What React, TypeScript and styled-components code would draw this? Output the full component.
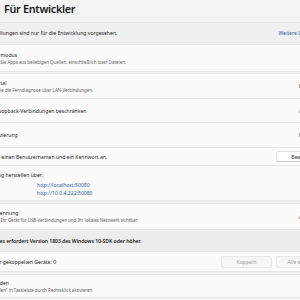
import React from "react";
import styled, { createGlobalStyle } from "styled-components";

const GlobalStyle = createGlobalStyle`
  html, body { margin: 0; padding: 0; background: #f3f3f3; }
  body {
    font-family: "Noto Sans", "Open Sans", sans-serif;
    color: #1b1b1b;
  }
`;

const Viewport = styled.div`
  width: 300px;
  height: 300px;
  overflow: hidden;
  background: #f3f3f3;
`;

const Column = styled.div`
  margin-left: -40px;
  width: 402px;
  display: flex;
  flex-direction: column;
`;

const PageTitle = styled.h1`
  margin: 0;
  height: 22px;
  box-sizing: border-box;
  padding: 3px 0 0 44px;
  font-size: 10.8px;
  letter-spacing: -0.3px;
  line-height: 12px;
  font-weight: 600;
  color: #1a1a1a;
  white-space: nowrap;
`;

const Card = styled.section<{ $mt?: number; $muted?: boolean }>`
  margin-top: ${(p) => p.$mt ?? 0}px;
  border: 1px solid #e5e5e5;
  border-radius: 3px;
  background: ${(p) => (p.$muted ? "#f0f0f0" : "#fbfbfb")};
  display: flex;
  flex-direction: column;
  overflow: hidden;
`;

const Row = styled.div<{
  $h: number;
  $divider?: boolean;
  $inset?: number;
  $end?: number;
  $shade?: boolean;
  $top?: boolean;
}>`
  box-sizing: border-box;
  height: ${(p) => p.$h}px;
  display: flex;
  align-items: ${(p) => (p.$top ? "flex-start" : "center")};
  justify-content: space-between;
  gap: 8px;
  padding: ${(p) => (p.$top ? 5 : 0)}px ${(p) => p.$end ?? 8}px 0 ${(p) => p.$inset ?? 15}px;
  border-top: ${(p) => (p.$divider ? "1px solid #e5e5e5" : "0")};
  background: ${(p) => (p.$shade ? "#ededed" : "transparent")};
`;

const TextStack = styled.div`
  display: flex;
  flex-direction: column;
  min-width: 0;
  white-space: nowrap;
`;

const Label = styled.span<{ $strong?: boolean }>`
  font-size: 5.1px;
  line-height: 8px;
  color: #1b1b1b;
  font-weight: ${(p) => (p.$strong ? 600 : 400)};
  letter-spacing: ${(p) => (p.$strong ? "-0.05px" : "0")};
  white-space: nowrap;
`;

const Caption = styled.span`
  font-size: 4.4px;
  line-height: 7px;
  color: #616161;
  white-space: nowrap;
`;

const LinkList = styled.div`
  display: flex;
  flex-direction: column;
  margin-top: 2px;
  padding-left: 61px;
`;

const Link = styled.a`
  font-size: 5.1px;
  line-height: 8px;
  color: #1f5fa8;
  text-decoration: none;
  white-space: nowrap;
`;

const MoreLink = styled.a`
  flex: 0 0 51px;
  font-size: 5.1px;
  line-height: 8px;
  color: #1f5fa8;
  text-decoration: none;
  white-space: nowrap;
`;

const Trailing = styled.div<{ $gap?: number }>`
  display: flex;
  align-items: center;
  flex-shrink: 0;
  gap: ${(p) => p.$gap ?? 0}px;
`;

const ToggleGroup = styled.div`
  flex: 0 0 34px;
  display: flex;
  align-items: center;
  gap: 6px;
`;

const ToggleText = styled.span`
  width: 10px;
  font-size: 5.1px;
  line-height: 8px;
  color: #1b1b1b;
`;

const Switch = styled.span<{ $on?: boolean }>`
  position: relative;
  box-sizing: border-box;
  width: 18px;
  height: 9px;
  border-radius: 5px;
  border: 1px solid ${(p) => (p.$on ? "#005fb8" : "#8a8a8a")};
  background: ${(p) => (p.$on ? "#005fb8" : "transparent")};
  &::after {
    content: "";
    position: absolute;
    top: 1.5px;
    left: ${(p) => (p.$on ? "10px" : "2px")};
    width: 4px;
    height: 4px;
    border-radius: 50%;
    background: ${(p) => (p.$on ? "#ffffff" : "#5a5a5a")};
  }
`;

const ChevronSlot = styled.span`
  flex: 0 0 20px;
  display: flex;
  justify-content: center;
  color: #555;
`;

const Button = styled.button<{ $w: number; $h: number; $disabled?: boolean }>`
  box-sizing: border-box;
  width: ${(p) => p.$w}px;
  height: ${(p) => p.$h}px;
  padding: 0 5px;
  border: 1px solid ${(p) => (p.$disabled ? "#e9e9e9" : "#e2e2e2")};
  border-bottom-color: ${(p) => (p.$disabled ? "#e9e9e9" : "#cfcfcf")};
  border-radius: 2px;
  background: ${(p) => (p.$disabled ? "#f6f6f6" : "#fefefe")};
  color: ${(p) => (p.$disabled ? "#9c9c9c" : "#1b1b1b")};
  font-family: inherit;
  font-size: 5.1px;
  line-height: 8px;
  text-align: center;
  white-space: nowrap;
  overflow: hidden;
`;

const Chevron = ({ up }: { up?: boolean }) => (
  <svg width="8" height="8" viewBox="0 0 8 8" fill="none">
    <path
      d={up ? "M1.5 5.2 L4 2.7 L6.5 5.2" : "M1.5 2.8 L4 5.3 L6.5 2.8"}
      stroke="currentColor"
      strokeWidth="0.8"
      strokeLinecap="round"
      strokeLinejoin="round"
    />
  </svg>
);

const Toggle = ({ on }: { on: boolean }) => (
  <ToggleGroup>
    <ToggleText>{on ? "Ein" : "Aus"}</ToggleText>
    <Switch $on={on} />
  </ToggleGroup>
);

export default function App() {
  return (
    <>
      <GlobalStyle />
      <Viewport>
        <Column>
          <PageTitle>Für Entwickler</PageTitle>

          <Card $muted>
            <Row $h={19} $inset={10} $end={28}>
              <Label>Diese Einstellungen sind nur für die Entwicklung vorgesehen.</Label>
              <MoreLink href="#">Weitere Informationen</MoreLink>
            </Row>
          </Card>

          <Card $mt={1}>
            <Row $h={26}>
              <TextStack>
                <Label>Entwicklermodus</Label>
                <Caption>Installieren Sie Apps aus beliebigen Quellen, einschließlich loser Dateien.</Caption>
              </TextStack>
              <Trailing>
                <Toggle on />
              </Trailing>
            </Row>
          </Card>

          <Card $mt={1}>
            <Row $h={24}>
              <TextStack>
                <Label>Geräteportal</Label>
                <Caption>Aktivieren Sie die Ferndiagnose über LAN-Verbindungen.</Caption>
              </TextStack>
              <Trailing>
                <Toggle on />
                <ChevronSlot>
                  <Chevron up />
                </ChevronSlot>
              </Trailing>
            </Row>
            <Row $h={24} $divider $end={28}>
              <Label>Nur auf Loopback-Verbindungen beschränken</Label>
              <Toggle on={false} />
            </Row>
            <Row $h={25} $divider $end={28}>
              <Label>Authentifizierung</Label>
              <Toggle on />
            </Row>
            <Row $h={18} $divider $end={28}>
              <Label>Geben Sie einen Benutzernamen und ein Kennwort an.</Label>
              <Button $w={57} $h={11}>Bearbeiten</Button>
            </Row>
            <Row $h={35} $divider $top $end={28}>
              <TextStack>
                <Label>Verbindung herstellen über:</Label>
                <LinkList>
                  <Link href="#">http://localhost:50080</Link>
                  <Link href="#">http://10.0.4.222:50080</Link>
                </LinkList>
              </TextStack>
            </Row>
          </Card>

          <Card $mt={2}>
            <Row $h={25}>
              <TextStack>
                <Label>Geräteerkennung</Label>
                <Caption>Machen Sie Ihr Gerät für USB-Verbindungen und Ihr lokales Netzwerk sichtbar.</Caption>
              </TextStack>
              <Trailing>
                <Toggle on={false} />
                <ChevronSlot>
                  <Chevron up />
                </ChevronSlot>
              </Trailing>
            </Row>
            <Row $h={22} $divider $shade $inset={28} $end={28}>
              <Label $strong>Dieses erfordert Version 1803 des Windows 10-SDK oder höher.</Label>
            </Row>
            <Row $h={20} $divider $end={28}>
              <Label>Anzahl der gekoppelten Geräte: 0</Label>
              <Trailing $gap={4}>
                <Button $w={51} $h={12} $disabled>Koppeln</Button>
                <Button $w={57} $h={12} $disabled>Alle entfernen</Button>
              </Trailing>
            </Row>
          </Card>

          <Card $mt={2}>
            <Row $h={22}>
              <TextStack>
                <Label>Task beenden</Label>
                <Caption>„Task beenden" in Taskleiste durch Rechtsklick aktivieren</Caption>
              </TextStack>
              <Trailing>
                <Toggle on={false} />
              </Trailing>
            </Row>
          </Card>

          <Card $mt={2}>
            <Row $h={26}>
              <Label>Datei-Explorer</Label>
            </Row>
          </Card>
        </Column>
      </Viewport>
    </>
  );
}
